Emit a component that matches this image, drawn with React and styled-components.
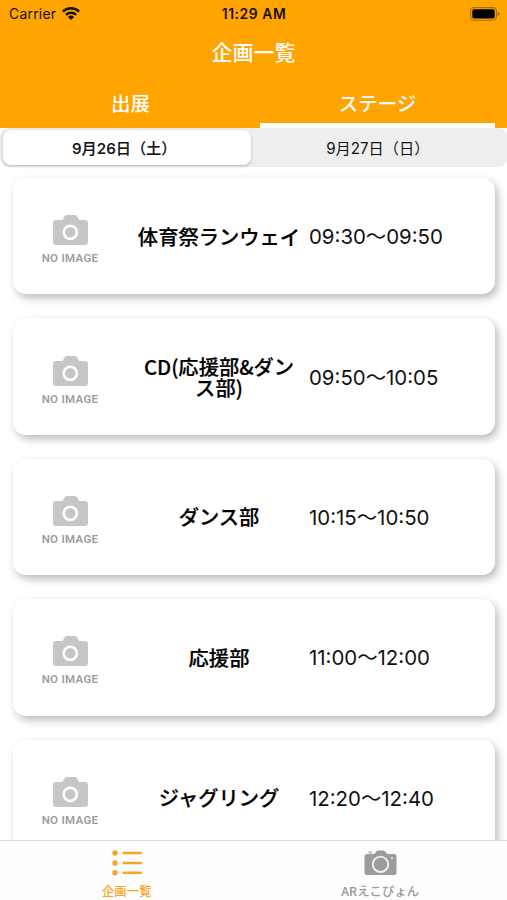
import React from "react";
import styled, { createGlobalStyle } from "styled-components";

const stages = [
  { name: "体育祭ランウェイ", time: "09:30～09:50" },
  { name: "CD(応援部&ダンス部)", time: "09:50～10:05" },
  { name: "ダンス部", time: "10:15～10:50" },
  { name: "応援部", time: "11:00～12:00" },
  { name: "ジャグリング", time: "12:20～12:40" }
];

const WifiIcon = () => (
  <svg width="18" height="13" viewBox="0 0 18 13">
    <g fill="none" stroke="#161000" strokeWidth="2.4">
      <path d="M0.9 4.6a11.5 11.5 0 0 1 16.2 0" />
      <path d="M3.9 7.9a7.2 7.2 0 0 1 10.2 0" />
    </g>
    <path d="M9 13 5.9 9.9a4.4 4.4 0 0 1 6.2 0z" fill="#161000" />
  </svg>
);

const BatteryIcon = () => (
  <svg width="30" height="14" viewBox="0 0 30 14">
    <rect x="0.6" y="0.6" width="25.8" height="12.6" rx="3.4" fill="none" stroke="#a86e00" strokeWidth="1.1" />
    <rect x="2.3" y="2.3" width="22.4" height="9.2" rx="1.8" fill="#000" />
    <path d="M27.6 4.6q1.9.8 1.9 2.3t-1.9 2.3z" fill="#a86e00" />
  </svg>
);

const PhotoIcon = () => (
  <svg width="35" height="30" viewBox="0 0 35 30">
    <path
      d="M3 5h6.5l2-3.6Q12.200 0 14 0h8q1.500 0 2.200 1.400L26 5h6q3 0 3 3v19q0 3-3 3H3q-3 0-3-3V8q0-3 3-3z"
      fill="#c6c6c6"
    />
    <circle cx="17.300" cy="17.300" r="6.600" fill="none" stroke="#fff" strokeWidth="2.600" />
  </svg>
);

const ListIcon = () => (
  <svg width="31" height="26" viewBox="0 0 31 26">
    <g fill="#f9a61f">
      <circle cx="4" cy="3" r="2.700" />
      <circle cx="4" cy="13" r="2.700" />
      <circle cx="4" cy="22.800" r="2.700" />
      <rect x="11.500" y="1.700" width="19.500" height="2.600" rx="1.200" />
      <rect x="11.500" y="11.700" width="19.500" height="2.600" rx="1.200" />
      <rect x="11.500" y="21.500" width="19.500" height="2.600" rx="1.200" />
    </g>
  </svg>
);

const CameraIcon = () => (
  <svg width="33" height="26" viewBox="0 0 33 26">
    <path
      d="M3 4h6Q10.500 4 11.500 2.500 12.700 0.500 14 0.500h5q1.700 0 3 2Q23 4 24.500 4H30q2.500 0 2.500 2.500v16q0 2.500-2.500 2.500H3Q.5 25 .5 22.500v-16Q.5 4 3 4z"
      fill="#9c9c9c"
    />
    <circle cx="6.300" cy="2.600" r="1.900" fill="#c4c4c4" />
    <circle cx="28" cy="8" r="1.200" fill="#d8d8d8" />
    <circle cx="16.500" cy="14.300" r="7.700" fill="none" stroke="#f2f2f2" strokeWidth="1.900" />
  </svg>
);

export default function App() {
  return (
    <Screen>
      <GlobalStyle />
      <Header>
        <StatusBar>
          <Carrier>
            Carrier
            <WifiIcon />
          </Carrier>
          <Clock>11:29 AM</Clock>
          <Battery>
            <BatteryIcon />
          </Battery>
        </StatusBar>
        <Title>企画一覧</Title>
        <Tabs>
          <Tab>出展</Tab>
          <Tab $active>ステージ</Tab>
        </Tabs>
      </Header>
      <Segment>
        <SegmentButton $active>9月26日（土）</SegmentButton>
        <SegmentButton>9月27日（日）</SegmentButton>
      </Segment>
      <StageList>
        {stages.map(stage => (
          <Card key={stage.name}>
            <Thumbnail>
              <PhotoIcon />
              <NoImage>NO IMAGE</NoImage>
            </Thumbnail>
            <Name>{stage.name}</Name>
            <Time>{stage.time}</Time>
          </Card>
        ))}
      </StageList>
      <BottomNav>
        <NavItem $active>
          <ListIcon />
          <NavLabel>企画一覧</NavLabel>
        </NavItem>
        <NavItem>
          <CameraIcon />
          <NavLabel>ARえこぴょん</NavLabel>
        </NavItem>
      </BottomNav>
    </Screen>
  );
}

const GlobalStyle = createGlobalStyle`
  * {
    box-sizing: border-box;
  }
  body {
    margin: 0;
    background: #fff;
    font-family: Inter, "Noto Sans CJK JP", sans-serif;
  }
  svg {
    display: block;
    flex-shrink: 0;
  }
`;

const Screen = styled.div`
  display: flex;
  flex-direction: column;
  width: 507px;
  height: 900px;
  overflow: hidden;
`;

// Header
const Header = styled.header`
  height: 128px;
  flex-shrink: 0;
  background: #ffa400;
`;

const StatusBar = styled.div`
  display: grid;
  grid-template-columns: 1fr auto 1fr;
  align-items: center;
  height: 27px;
  padding: 0 7px 0 9px;
  color: #161000;
`;

const Carrier = styled.div`
  display: flex;
  align-items: center;
  gap: 6px;
  font-size: 13.8px;
  letter-spacing: 0.3px;
`;

const Clock = styled.div`
  font-size: 13.8px;
  font-weight: 600;
  letter-spacing: 0.6px;
  text-indent: -1px;
`;

const Battery = styled.div`
  display: flex;
  justify-content: flex-end;
`;

const Title = styled.h1`
  margin: 0;
  height: 53px;
  line-height: 52px;
  text-align: center;
  font-size: 21px;
  font-weight: 500;
  color: #fff;
`;

const Tabs = styled.nav`
  display: flex;
  gap: 12px;
  height: 48px;
  padding: 0 12px 0 13px;
`;

const Tab = styled.div`
  flex: 1;
  border-bottom: 5px solid ${props => (props.$active ? "#fff" : "transparent")};
  line-height: 49px;
  text-align: center;
  font-size: 19.5px;
  font-weight: 500;
  color: #fff;
`;

// Day switch
const Segment = styled.div`
  display: flex;
  gap: 6px;
  height: 39px;
  flex-shrink: 0;
  padding: 2px 3px;
  border-radius: 9px;
  background: #eee;
`;

const SegmentButton = styled.div`
  flex: 1;
  border-radius: 8px;
  line-height: 37px;
  text-align: center;
  text-indent: -5px;
  font-size: 15.2px;
  font-weight: ${props => (props.$active ? 500 : 400)};
  color: #111;
  ${props =>
    props.$active &&
    `
    background: #fff;
    box-shadow: 0 1px 3px rgba(0, 0, 0, 0.25);
    -webkit-text-stroke: 0.15px #111;
  `}
`;

// Stage cards
const StageList = styled.main`
  display: flex;
  flex-direction: column;
  flex: 1;
  gap: 24px;
  min-height: 0;
  padding: 11px 12px 0 13px;
  overflow: hidden;
`;

const Card = styled.section`
  display: grid;
  grid-template-columns: 114px 182px 1fr;
  align-items: center;
  flex-shrink: 0;
  height: 116.4px;
  border-radius: 13px;
  background: #fff;
  box-shadow: 3px 4px 8px rgba(0, 0, 0, 0.27);
`;

const Thumbnail = styled.div`
  display: flex;
  flex-direction: column;
  align-items: center;
  gap: 6px;
  padding-top: 8px;
`;

const NoImage = styled.div`
  font-family: Roboto, sans-serif;
  font-size: 11.5px;
  font-weight: 600;
  line-height: 14px;
  letter-spacing: 0.3px;
  color: #9d9d9d;
`;

const Name = styled.h2`
  margin: 0 0 0 2px;
  width: 164px;
  justify-self: center;
  text-align: center;
  font-family: "Noto Sans CJK JP", sans-serif;
  font-size: 20.3px;
  font-weight: 500;
  line-height: 21px;
  word-break: break-all;
  color: #000;
  -webkit-text-stroke: 0.2px #000;
`;

const Time = styled.div`
  padding-bottom: 2px;
  font-size: 20.4px;
  white-space: nowrap;
  color: #111;
`;

// Bottom navigation
const BottomNav = styled.footer`
  display: flex;
  height: 60px;
  flex-shrink: 0;
  border-top: 1px solid #d8d8d8;
  background: #fdfdfd;
`;

const NavItem = styled.div`
  display: flex;
  flex: 1;
  flex-direction: column;
  align-items: center;
  gap: 7px;
  padding-top: 9px;
  color: ${props => (props.$active ? "#ffa41c" : "#999")};
`;

const NavLabel = styled.span`
  font-family: "Noto Sans CJK JP", sans-serif;
  font-size: 12.3px;
  font-weight: 500;
  line-height: 16px;
  letter-spacing: 0.1px;
`;
